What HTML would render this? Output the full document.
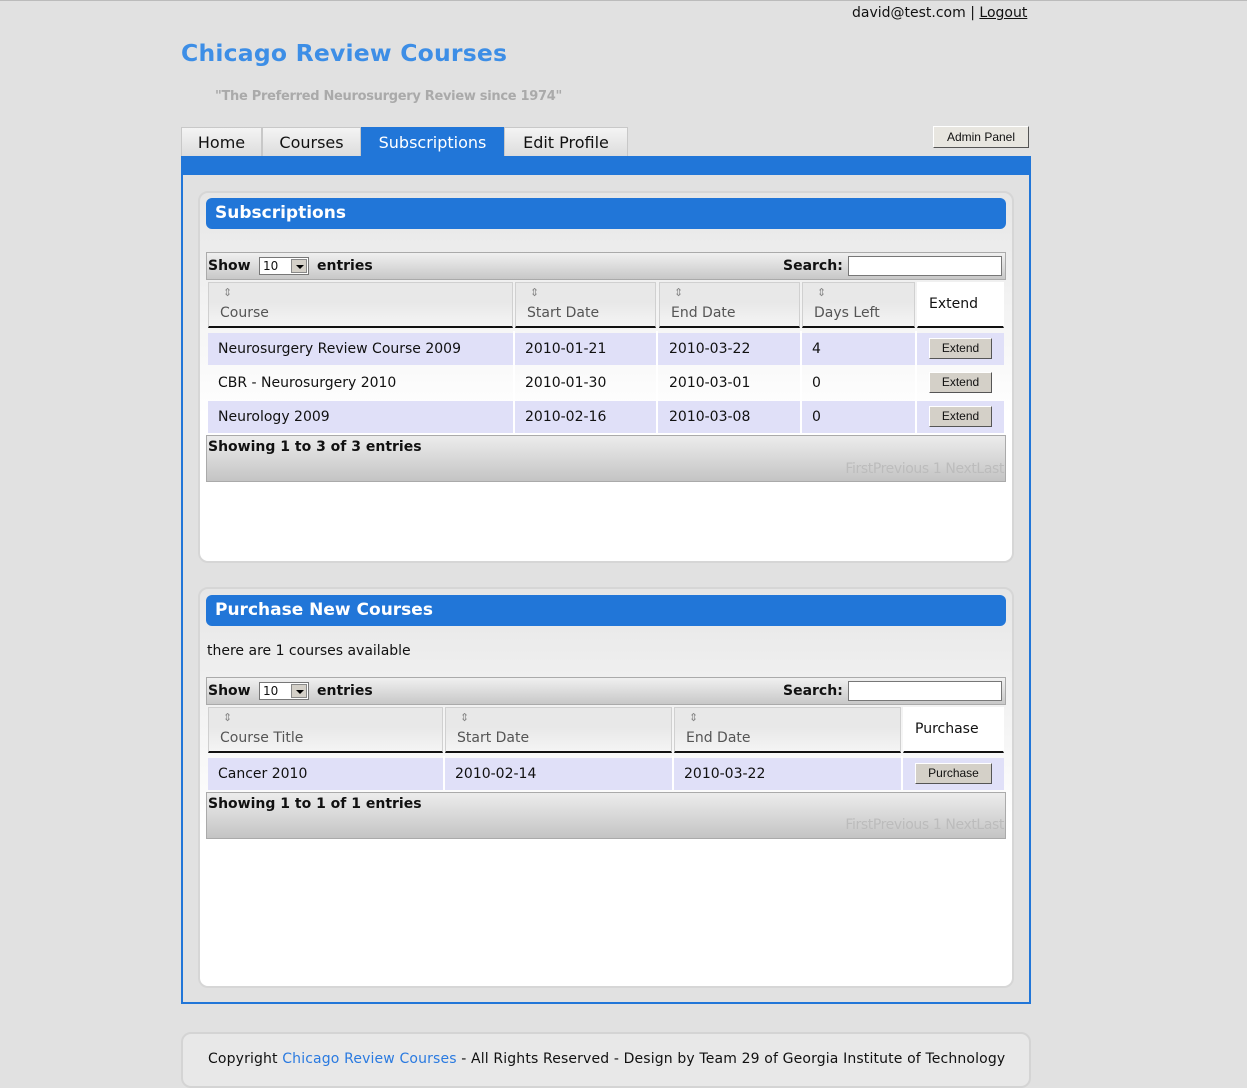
<!DOCTYPE html>
<html><head><meta charset="utf-8"><style>
*{margin:0;padding:0;box-sizing:border-box}
body{width:1247px;height:1088px;background:#e1e1e1;font-family:"DejaVu Sans","Liberation Sans",sans-serif;font-size:13px;color:#111;position:relative;overflow:hidden;border-top:1px solid #bbb}
.a{position:absolute}
.tab{position:absolute;top:126px;height:30px;background:linear-gradient(#f4f4f4,#dcdcdc);border:1px solid #c8c8c8;border-bottom:none;font-size:16px;text-align:center;line-height:30px;color:#111}
.box{position:absolute;left:198px;width:816px;background:linear-gradient(#e6e6e6,#ffffff 60%);border:2px solid #d6d6d6;border-radius:10px}
.hd{position:absolute;left:206px;width:800px;height:31px;background:#2176d8;border-radius:6px;color:#fff;font-size:17px;line-height:31px;padding-left:9px;font-weight:bold}
.bar{position:absolute;left:206px;width:800px;height:28px;background:linear-gradient(#f0f0f0,#c8c8c8);border:1px solid #aaa;font-weight:bold;font-size:14px;line-height:26px}
.sel{position:absolute;top:4px;width:50px;height:18px;background:#fff;border:1px solid #777;font-weight:normal;font-size:12px;line-height:16px;padding-left:3px}
.sel b{position:absolute;right:1px;top:1px;width:16px;height:14px;background:#d4d0c8;border:1px solid #888}
.sel b:after{content:"";position:absolute;left:4px;top:5px;border:4px solid transparent;border-top:4px solid #000}
.inp{position:absolute;top:3px;right:3px;width:154px;height:20px;background:#fff;border:1px solid #777}
.th{position:absolute;height:46px;background:linear-gradient(#e8e8e8 45%,#f4f4f4);border:1px solid #d0d0d0;border-bottom:2px solid #111;color:#555;font-size:14px;padding-left:11px}
.th i{position:absolute;left:14px;top:3px;font-style:normal;font-size:11px;color:#888}
.th span{position:absolute;top:22px}
.td{position:absolute;height:32px;line-height:32px;font-size:14px;padding-left:11px}
.btn{position:absolute;width:63px;height:21px;background:#d4d0c8;border:1px solid;border-color:#fff #555 #555 #fff;font-size:12px;text-align:center;line-height:19px;font-family:"Liberation Sans",sans-serif}
.ft{position:absolute;left:206px;width:800px;height:47px;background:linear-gradient(#ececec,#c4c4c4);border:1px solid #aaa;font-weight:bold;font-size:14px;padding:3px 0 0 1px}
.pg{position:absolute;right:1px;top:25px;color:#bcbcbc;font-weight:normal;font-size:14px;letter-spacing:-0.4px}
</style></head><body>
<div class="a" style="left:852px;top:4px;font-size:14px">david@test.com | <u>Logout</u></div>
<div class="a" style="left:181px;top:38px;font-size:23.5px;font-weight:bold;color:#3d8ee6;letter-spacing:0.2px">Chicago Review Courses</div>
<div class="a" style="left:215px;top:88px;font-size:13px;font-weight:bold;color:#aaa;letter-spacing:-0.3px">"The Preferred Neurosurgery Review since 1974"</div>
<div class="tab" style="left:181px;width:81px">Home</div>
<div class="tab" style="left:262px;width:99px">Courses</div>
<div class="tab" style="left:361px;width:143px;background:#2176d8;color:#fff;border-color:#2176d8">Subscriptions</div>
<div class="tab" style="left:504px;width:124px">Edit Profile</div>
<div class="a" style="left:933px;top:125px;width:96px;height:22px;background:#e8e6e0;border:1px solid;border-color:#fff #555 #555 #fff;font-size:12px;text-align:center;line-height:20px;font-family:'Liberation Sans',sans-serif">Admin Panel</div>
<div class="a" style="left:181px;top:155px;width:850px;height:848px;border:2px solid #2176d8;border-top:19px solid #2176d8;background:#e1e1e1"></div>

<div class="box" style="top:190px;height:372px"></div>
<div class="hd" style="top:197px">Subscriptions</div>
<div class="bar" style="top:251px"><span class="a" style="left:1px">Show</span><div class="sel" style="left:52px">10<b></b></div><span class="a" style="left:110px">entries</span><span class="a" style="left:576px">Search:</span><div class="inp"></div></div>
<div class="th" style="left:208px;top:281px;width:305px"><i>⇕</i><span>Course</span></div>
<div class="th" style="left:515px;top:281px;width:141px"><i>⇕</i><span>Start Date</span></div>
<div class="th" style="left:659px;top:281px;width:141px"><i>⇕</i><span>End Date</span></div>
<div class="th" style="left:802px;top:281px;width:113px"><i>⇕</i><span>Days Left</span></div>
<div class="th" style="left:917px;top:281px;width:87px;background:#fff;border-color:#fff #fff #111;color:#111;padding-top:13px">Extend</div>
<div class="a" style="left:208px;top:332px;width:796px;height:32px;background:#e0e0f8"></div>
<div class="a" style="left:208px;top:400px;width:796px;height:32px;background:#e0e0f8"></div>
<div class="a" style="left:513px;top:330px;width:2px;height:104px;background:#fff"></div>
<div class="a" style="left:656px;top:330px;width:2px;height:104px;background:#fff"></div>
<div class="a" style="left:800px;top:330px;width:2px;height:104px;background:#fff"></div>
<div class="a" style="left:915px;top:330px;width:2px;height:104px;background:#fff"></div>
<div class="td" style="left:207px;top:332px">Neurosurgery Review Course 2009</div><div class="td" style="left:514px;top:332px">2010-01-21</div><div class="td" style="left:658px;top:332px">2010-03-22</div><div class="td" style="left:801px;top:332px">4</div><div class="btn" style="left:929px;top:337px">Extend</div>
<div class="td" style="left:207px;top:366px">CBR - Neurosurgery 2010</div><div class="td" style="left:514px;top:366px">2010-01-30</div><div class="td" style="left:658px;top:366px">2010-03-01</div><div class="td" style="left:801px;top:366px">0</div><div class="btn" style="left:929px;top:371px">Extend</div>
<div class="td" style="left:207px;top:400px">Neurology 2009</div><div class="td" style="left:514px;top:400px">2010-02-16</div><div class="td" style="left:658px;top:400px">2010-03-08</div><div class="td" style="left:801px;top:400px">0</div><div class="btn" style="left:929px;top:405px">Extend</div>
<div class="ft" style="top:434px">Showing 1 to 3 of 3 entries<div class="pg">FirstPrevious 1 NextLast</div></div>

<div class="box" style="top:586px;height:401px"></div>
<div class="hd" style="top:594px">Purchase New Courses</div>
<div class="a" style="left:207px;top:642px;font-size:14px">there are 1 courses available</div>
<div class="bar" style="top:676px"><span class="a" style="left:1px">Show</span><div class="sel" style="left:52px">10<b></b></div><span class="a" style="left:110px">entries</span><span class="a" style="left:576px">Search:</span><div class="inp"></div></div>
<div class="th" style="left:208px;top:706px;width:235px"><i>⇕</i><span>Course Title</span></div>
<div class="th" style="left:445px;top:706px;width:227px"><i>⇕</i><span>Start Date</span></div>
<div class="th" style="left:674px;top:706px;width:227px"><i>⇕</i><span>End Date</span></div>
<div class="th" style="left:903px;top:706px;width:101px;background:#fff;border-color:#fff #fff #111;color:#111;padding-top:13px">Purchase</div>
<div class="a" style="left:208px;top:757px;width:796px;height:32px;background:#e0e0f8"></div>
<div class="a" style="left:443px;top:755px;width:2px;height:34px;background:#fff"></div>
<div class="a" style="left:672px;top:755px;width:2px;height:34px;background:#fff"></div>
<div class="a" style="left:901px;top:755px;width:2px;height:34px;background:#fff"></div>
<div class="td" style="left:207px;top:757px">Cancer 2010</div><div class="td" style="left:444px;top:757px">2010-02-14</div><div class="td" style="left:673px;top:757px">2010-03-22</div><div class="btn" style="left:915px;top:762px;width:77px">Purchase</div>
<div class="ft" style="top:791px">Showing 1 to 1 of 1 entries<div class="pg" style="top:24px">FirstPrevious 1 NextLast</div></div>

<div class="a" style="left:181px;top:1031px;width:850px;height:56px;background:#e8e8e8;border:2px solid #d4d4d4;border-radius:10px;font-size:14px;padding:17px 0 0 25px;white-space:nowrap;letter-spacing:0.14px">Copyright <span style="color:#2a7ae0">Chicago Review Courses</span> - All Rights Reserved - Design by Team 29 of Georgia Institute of Technology</div>
</body></html>
